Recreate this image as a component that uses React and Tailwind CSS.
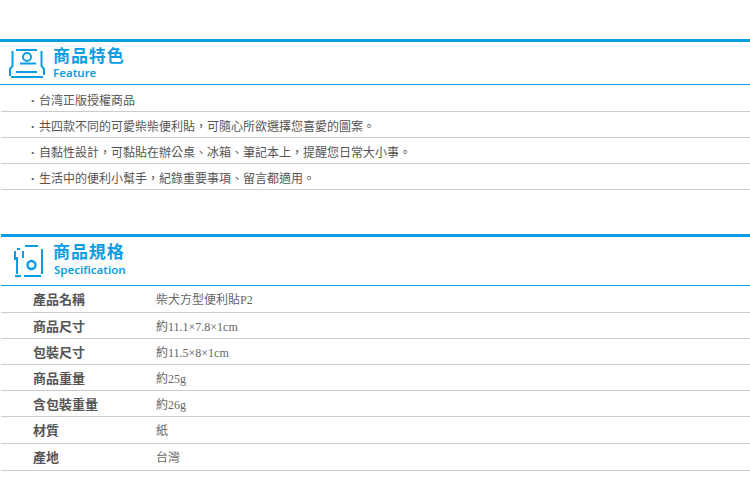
import React from 'react';

const features = [
  '台湾正版授權商品',
  '共四款不同的可愛柴柴便利貼\uFF0C可隨心所欲選擇您喜愛的圖案。',
  '自黏性設計\uFF0C可黏貼在辦公桌、冰箱、筆記本上\uFF0C提醒您日常大小事。',
  '生活中的便利小幫手\uFF0C紀錄重要事項、留言都適用。',
];

const specs = [
  ['產品名稱', '柴犬方型便利貼P2', 'h-[27px]'],
  ['商品尺寸', '約11.1×7.8×1cm', 'h-[26px]'],
  ['包裝尺寸', '約11.5×8×1cm', 'h-[26px]'],
  ['商品重量', '約25g', 'h-[26px]'],
  ['含包裝重量', '約26g', 'h-[26px]'],
  ['材質', '紙', 'h-[27px]'],
  ['產地', '台灣', 'h-[27px]'],
];

function FeatureIcon() {
  return (
    <svg width="36" height="31" viewBox="0 0 36 31" fill="none" stroke="#0b9de3" strokeWidth="2" className="shrink-0">
      <path d="M7 2H28" />
      <path d="M3.5 3V18L1 21V28M32.5 3V18L35 21V27" />
      <circle cx="18" cy="9" r="4" />
      <path d="M11 15.5H27" />
      <path d="M7 24H28" />
      <path d="M2 29H34" />
    </svg>
  );
}

function SpecIcon() {
  return (
    <svg width="30" height="32" viewBox="0 0 30 32" fill="none" stroke="#0b9de3" strokeWidth="2" className="shrink-0">
      <path d="M12 1H25" />
      <path d="M2 6V15M4 4H7M4 12V29" />
      <path d="M29 4V29" />
      <path d="M10 6V13" />
      <circle cx="18.5" cy="20" r="4" strokeWidth="2.4" />
      <path d="M2 31H8M11 31H28" />
    </svg>
  );
}

function SectionHeader({ icon, iconBox, title, sub, rowHeight, textBox, subClass }) {
  return (
    <header className="border-t-[3px] border-[#0b9de3]">
      <div className={`flex border-b border-[#0b9de3] ${rowHeight}`}>
        <div className={`flex items-center ${iconBox}`}>{icon}</div>
        <div className={`flex flex-col ${textBox}`}>
          <h2 className="font-['Liberation_Sans','Noto_Sans_CJK_TC',sans-serif] text-[17px] leading-[21px] font-bold tracking-[0.9px] text-[#0b9de3]">
            {title}
          </h2>
          <p className={`text-[11.5px] font-semibold text-[#0b9de3] ${subClass}`}>{sub}</p>
        </div>
      </div>
    </header>
  );
}

export default function App() {
  return (
    <main className="min-h-[496px] bg-white pt-[39px] font-['Noto_Sans','Noto_Sans_CJK_TC',sans-serif] text-[#555]">
      <section>
        <SectionHeader
          icon={<FeatureIcon />}
          iconBox="w-[53px] pl-[9px]"
          title="商品特色"
          sub="Feature"
          rowHeight="h-[43px]"
          textBox="pt-[4px]"
          subClass="leading-[12px]"
        />
        <ul className="ml-[1px] pt-px">
          {features.map((item) => (
            <li
              key={item}
              className="flex h-[26px] items-center border-b border-[#cccccc] pt-[5px] pl-[30px] text-[12px] text-[#555]"
            >
              <span className="w-[8px] font-bold">·</span>
              {item}
            </li>
          ))}
        </ul>
      </section>

      <section className="mt-[44px] ml-[1px]">
        <SectionHeader
          icon={<SpecIcon />}
          iconBox="w-[52px] pl-[12px]"
          title="商品規格"
          sub="Specification"
          rowHeight="h-[49px]"
          textBox="pt-[5px]"
          subClass="pl-px leading-[13px]"
        />
        <dl>
          {specs.map(([label, value, height]) => (
            <div key={label} className={`flex items-center border-b border-[#cccccc] pt-[2px] pl-[32px] ${height}`}>
              <dt className="w-[123px] text-[13px] font-bold text-[#555]">{label}</dt>
              <dd className="font-['Liberation_Serif','Noto_Sans_CJK_TC',serif] text-[12px] text-[#666]">{value}</dd>
            </div>
          ))}
        </dl>
      </section>
    </main>
  );
}
